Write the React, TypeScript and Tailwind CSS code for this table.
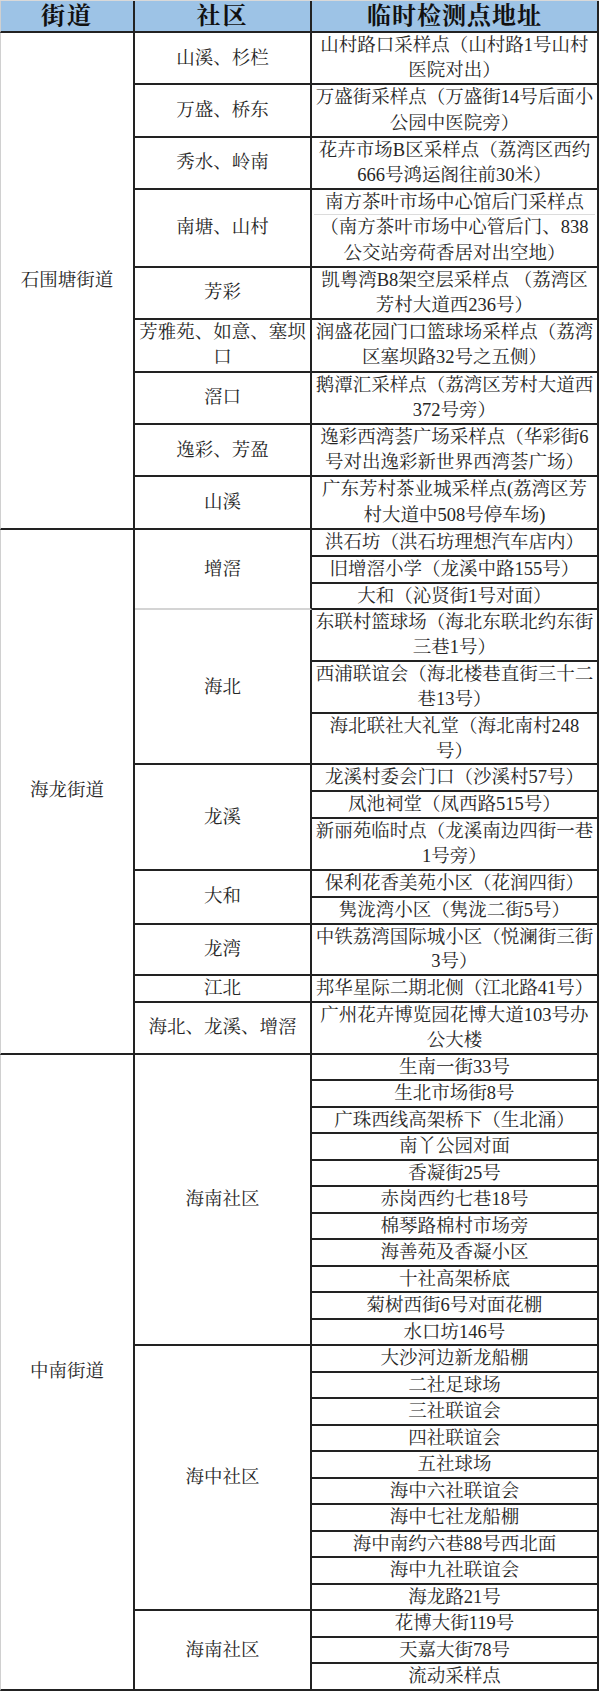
import React from 'react';

interface Group {
  name: string;
  items: string[];
  lightBottom?: boolean;
}

interface Section {
  street: string;
  leading: string;
  groups: Group[];
}

// 南塘、山村 row has a faint rule under its first line, handled by the '|' marker
const sections: Section[] = [
  {
    street: '石围塘街道',
    leading: 'leading-[25.2px]',
    groups: [
      { name: '山溪、杉栏', items: ['山村路口采样点（山村路1号山村医院对出）'] },
      { name: '万盛、桥东', items: ['万盛街采样点（万盛街14号后面小公园中医院旁）'] },
      { name: '秀水、岭南', items: ['花卉市场B区采样点（荔湾区西约666号鸿运阁往前30米）'] },
      { name: '南塘、山村', items: ['南方茶叶市场中心馆后门采样点|（南方茶叶市场中心管后门、838公交站旁荷香居对出空地）'] },
      { name: '芳彩', items: ['凯粤湾B8架空层采样点 （荔湾区芳村大道西236号）'] },
      { name: '芳雅苑、如意、塞坝口', items: ['润盛花园门口篮球场采样点（荔湾区塞坝路32号之五侧）'] },
      { name: '滘口', items: ['鹅潭汇采样点（荔湾区芳村大道西372号旁）'] },
      { name: '逸彩、芳盈', items: ['逸彩西湾荟广场采样点（华彩街6号对出逸彩新世界西湾荟广场）'] },
      { name: '山溪', items: ['广东芳村茶业城采样点(荔湾区芳村大道中508号停车场)'] },
    ],
  },
  {
    street: '海龙街道',
    leading: 'leading-[24.85px]',
    groups: [
      {
        name: '增滘',
        lightBottom: true,
        items: ['洪石坊（洪石坊理想汽车店内）', '旧增滘小学（龙溪中路155号）', '大和（沁贤街1号对面）'],
      },
      {
        name: '海北',
        items: ['东联村篮球场（海北东联北约东街三巷1号）', '西浦联谊会（海北楼巷直街三十二巷13号）', '海北联社大礼堂（海北南村248\n号）'],
      },
      {
        name: '龙溪',
        items: ['龙溪村委会门口（沙溪村57号）', '凤池祠堂（凤西路515号）', '新丽苑临时点（龙溪南边四街一巷1号旁）'],
      },
      { name: '大和', items: ['保利花香美苑小区（花润四街）', '隽泷湾小区（隽泷二街5号）'] },
      { name: '龙湾', items: ['中铁荔湾国际城小区（悦澜街三街3号）'] },
      { name: '江北', items: ['邦华星际二期北侧（江北路41号）'] },
      { name: '海北、龙溪、增滘', items: ['广州花卉博览园花博大道103号办公大楼'] },
    ],
  },
  {
    street: '中南街道',
    leading: 'leading-[24.5px]',
    groups: [
      {
        name: '海南社区',
        items: [
          '生南一街33号',
          '生北市场街8号',
          '广珠西线高架桥下（生北涌）',
          '南丫公园对面',
          '香凝街25号',
          '赤岗西约七巷18号',
          '棉琴路棉村市场旁',
          '海善苑及香凝小区',
          '十社高架桥底',
          '菊树西街6号对面花棚',
          '水口坊146号',
        ],
      },
      {
        name: '海中社区',
        items: [
          '大沙河边新龙船棚',
          '二社足球场',
          '三社联谊会',
          '四社联谊会',
          '五社球场',
          '海中六社联谊会',
          '海中七社龙船棚',
          '海中南约六巷88号西北面',
          '海中九社联谊会',
          '海龙路21号',
        ],
      },
      { name: '海南社区', items: ['花博大街119号', '天嘉大街78号', '流动采样点'] },
    ],
  },
];

const AddressCell: React.FC<{ text: string; leading: string }> = ({ text, leading }) => {
  if (text.includes('|')) {
    const [first, rest] = text.split('|');
    return (
      <div className={`border-b-2 border-r-2 border-[#222] px-[2px] text-center ${leading}`}>
        <div className="border-b border-[#dcdcdc] leading-[24.2px]">{first}</div>
        <div>{rest}</div>
      </div>
    );
  }
  return (
    <div className={`whitespace-pre-line border-b-2 border-r-2 border-[#222] px-[2px] text-center ${leading}`}>
      {text}
    </div>
  );
};

export default function App() {
  return (
    <div className="min-h-screen bg-white">
      <div className="w-[599px] font-['Liberation_Serif','Noto_Serif_CJK_SC','Noto_Sans_CJK_SC',serif] text-[18.5px] text-[#262626]">
        {/* Header */}
        <div className="flex h-[33px] border-t border-[#d9d9d9] bg-[#9dc3e6] text-[24px] font-bold leading-none text-[#111]">
          <div className="flex w-[135px] shrink-0 items-center justify-center border-b-2 border-l border-r-2 border-b-[#222] border-l-[#d0d0d0] border-r-[#222] tracking-[2px]">
            街道
          </div>
          <div className="flex w-[177px] shrink-0 items-center justify-center border-b-2 border-r-2 border-[#222] tracking-[2px]">
            社区
          </div>
          <div className="flex flex-1 items-center justify-center border-b-2 border-r-2 border-[#222] tracking-[1px]">
            临时检测点地址
          </div>
        </div>

        {sections.map((s, si) => (
          <div key={si} className="flex">
            <div className="flex w-[135px] shrink-0 items-center justify-center border-b-2 border-l border-r-2 border-b-[#222] border-l-[#d0d0d0] border-r-[#222]">
              {s.street}
            </div>
            <div className="flex flex-1 flex-col">
              {s.groups.map((g, gi) => (
                <div key={gi} className="flex">
                  <div
                    className={`flex w-[177px] shrink-0 items-center justify-center border-b-2 border-r-2 border-r-[#222] px-[1px] text-center ${s.leading} ${
                      g.lightBottom ? 'border-b-[#d4d4d4]' : 'border-b-[#222]'
                    }`}
                  >
                    {g.name}
                  </div>
                  <div className="flex flex-1 flex-col">
                    {g.items.map((item, ii) => (
                      <AddressCell key={ii} text={item} leading={s.leading} />
                    ))}
                  </div>
                </div>
              ))}
            </div>
          </div>
        ))}
      </div>
    </div>
  );
}
